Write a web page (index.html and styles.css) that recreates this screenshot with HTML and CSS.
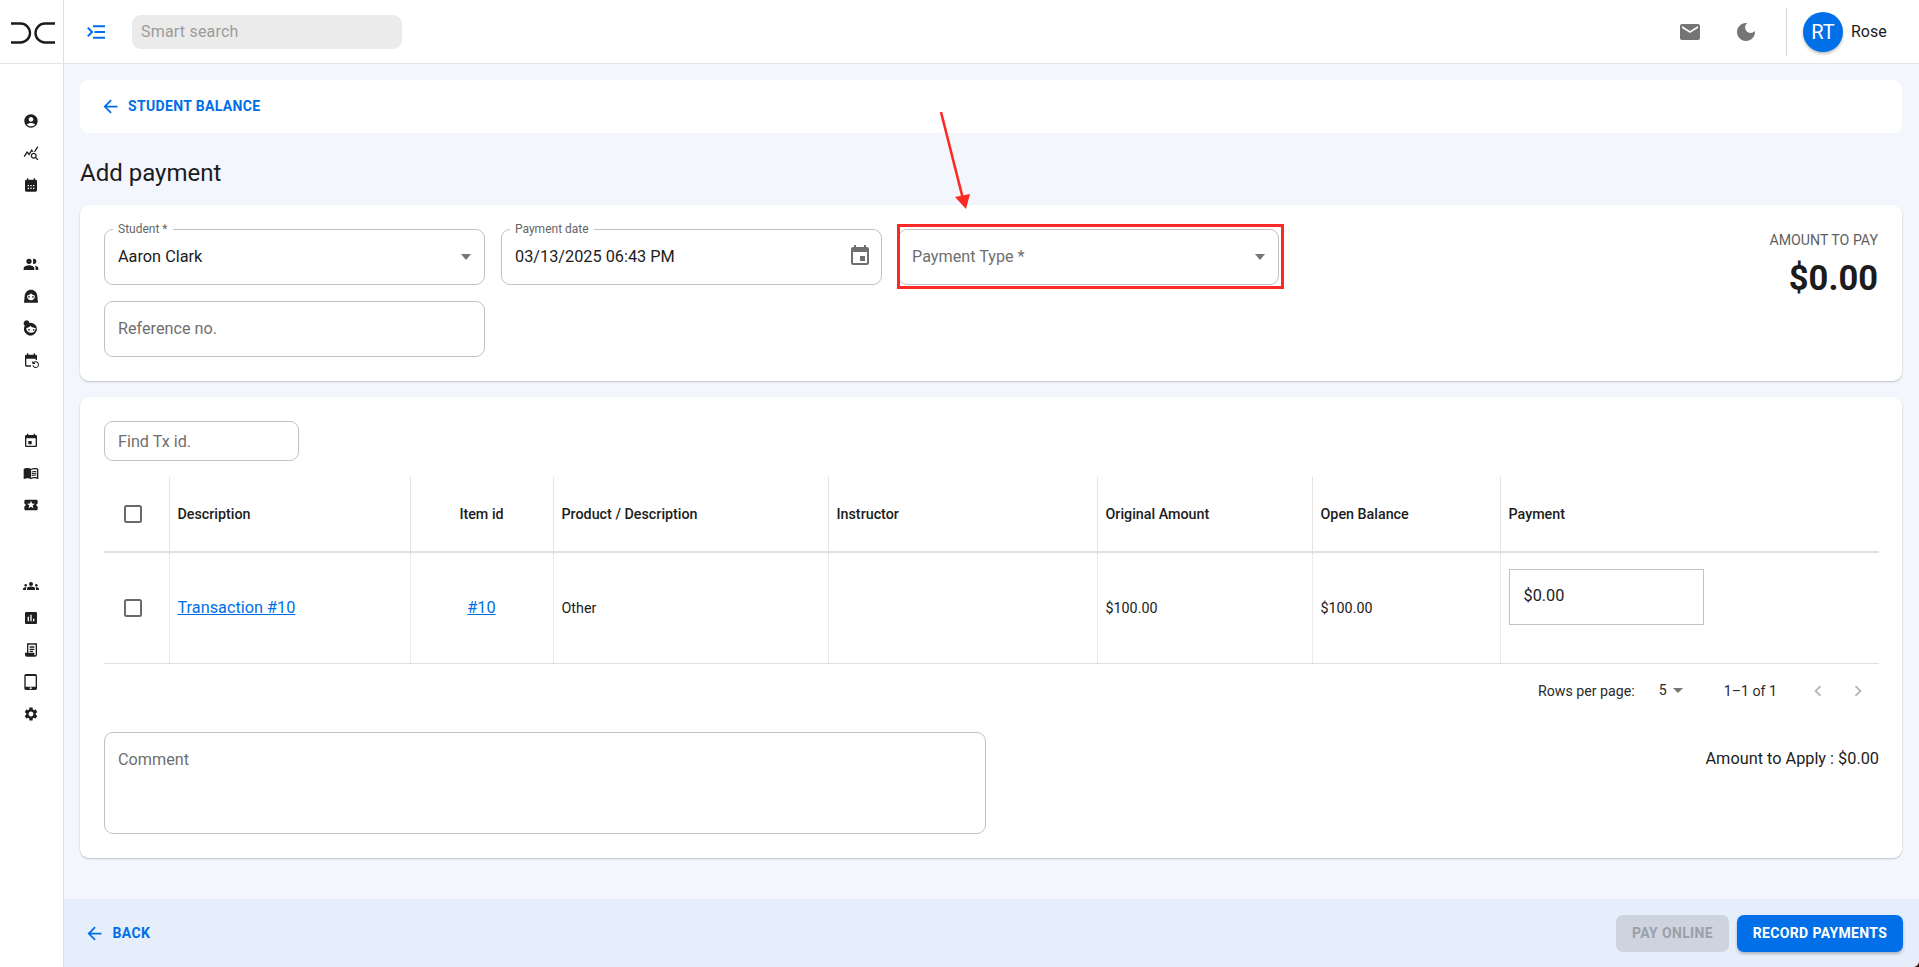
FILE: index.html
```html
<!DOCTYPE html>
<html lang="en">
<head>
<meta charset="utf-8">
<title>Add payment</title>
<link rel="stylesheet" href="styles.css">
</head>
<body>
<div class="app">
  <header class="topbar">
    <div class="logo-cell">
      <svg class="logo" viewBox="0 0 44 22" width="44" height="22"><path d="M0 1.500H9.500a9 9 0 0 1 0 19H0M44 1.500H34a9 9 0 0 0 0 19H44" fill="none" stroke="#1b1b1b" stroke-width="2.400"/></svg>
    </div>
    <div class="topbar-main">
      <svg class="menu-icon" viewBox="0 0 18 14" width="18" height="14"><path d="M6 1.200H18M7.500 7H18M6 12.800H18M.8 2.600 5 7 .8 11.400" fill="none" stroke="#006fe6" stroke-width="2"/></svg>
      <div class="search">Smart search</div>
      <div class="top-actions">
        <svg class="top-icon" viewBox="0 0 24 24"><path d="M20 4H4c-1.100 0-1.990.9-1.990 2L2 18c0 1.100.9 2 2 2h16c1.100 0 2-.9 2-2V6c0-1.100-.9-2-2-2zm0 4-8 5-8-5V6l8 5 8-5v2z"/></svg>
        <svg class="top-icon moon" viewBox="0 0 24 24"><path d="M12 3c-4.970 0-9 4.030-9 9s4.030 9 9 9 9-4.030 9-9c0-.46-.04-.92-.1-1.360-.98 1.370-2.580 2.260-4.400 2.260-2.980 0-5.400-2.420-5.400-5.400 0-1.810.89-3.420 2.260-4.400-.44-.06-.9-.1-1.360-.1z"/></svg>
        <div class="divider"></div>
        <div class="avatar">RT</div>
        <span class="user">Rose</span>
      </div>
    </div>
  </header>
  <div class="body-row">
    <nav class="sidebar">
      <div class="nav-group g1">
        <svg viewBox="0 0 24 24"><path d="M12 2C6.480 2 2 6.480 2 12s4.480 10 10 10 10-4.480 10-10S17.520 2 12 2zm0 4c1.930 0 3.500 1.570 3.500 3.500S13.930 13 12 13s-3.500-1.570-3.500-3.500S10.070 6 12 6zm0 14c-2.030 0-4.430-.82-6.140-2.880C7.550 15.800 9.680 15 12 15s4.450.8 6.140 2.120C16.430 19.180 14.030 20 12 20z"/></svg>
        <svg viewBox="0 0 24 24"><path d="M19.880 18.470c.44-.7.7-1.510.7-2.390 0-2.490-2.010-4.500-4.500-4.500s-4.500 2.010-4.500 4.500 2.010 4.500 4.490 4.500c.88 0 1.700-.26 2.390-.7L21.580 23 23 21.580l-3.120-3.110zm-3.800.11c-1.380 0-2.500-1.120-2.500-2.500s1.120-2.500 2.500-2.500 2.500 1.120 2.500 2.500-1.120 2.500-2.500 2.500zm-.36-8.500c-.74.02-1.450.18-2.100.45l-.55-.83-3.800 6.180-3.010-3.520-3.630 5.810L1 17l5-8 3 3.500L13 6l2.720 4.080zm2.590.5c-.64-.28-1.330-.45-2.050-.49L21.380 2 23 3.180l-4.690 7.400z"/></svg>
        <svg viewBox="0 0 24 24"><path fill-rule="evenodd" d="M19 4h-1V2h-2v2H8V2H6v2H5c-1.100 0-2 .9-2 2v14c0 1.100.9 2 2 2h14c1.100 0 2-.9 2-2V6c0-1.100-.9-2-2-2zM9 14H7v-2h2v2zm4 0h-2v-2h2v2zm4 0h-2v-2h2v2zm-8 4H7v-2h2v2zm4 0h-2v-2h2v2zm4 0h-2v-2h2v2z"/></svg>
      </div>
      <div class="nav-group g2">
        <svg viewBox="0 0 24 24"><path d="M9 12a4 4 0 1 0 0-8 4 4 0 0 0 0 8zm0 2c-3 0-8 1.500-8 4.500V21h16v-2.500C17 15.500 12 14 9 14zM16 4a4 4 0 0 1 0 8c-.4 0-.8 0-1.200-.2A5.500 5.500 0 0 0 15 8a5.500 5.500 0 0 0-.2-3.800C15.200 4 15.600 4 16 4zM18 14.500c2.500.5 5 1.600 5 4V21h-4v-2.500c0-1.500-.3-2.900-1-4z"/></svg>
        <svg viewBox="0 0 24 24"><path fill-rule="evenodd" d="M1.500 22l1-10C3 6.500 7 2.500 12 2.500S21 6.500 21.500 12l1 10zM12 8c-1.500 2-3.500 3-5.700 3.200A5.900 5.900 0 0 0 12 18.500a5.900 5.900 0 0 0 5.700-7.300C15.500 11 13.500 10 12 8zM9 12a1.300 1.300 0 1 0 0 2.600A1.300 1.300 0 0 0 9 12zm6 0a1.300 1.300 0 1 0 0 2.600 1.300 1.300 0 0 0 0-2.600z"/></svg>
        <svg viewBox="0 0 24 24"><path fill-rule="evenodd" d="M5.500.5a4.500 4.500 0 0 0-2.700 8.100A9.700 9.700 0 1 0 12.500 4a9.700 9.700 0 0 0-2.700.4A4.500 4.500 0 0 0 5.500.5zM4.900 12.200c2.500-.1 4.800-1.400 6.100-3.400 1.700 2.200 4.900 3.500 8.100 3.300a7 7 0 1 1-14.200.1zM9 13.500a1.300 1.300 0 1 0 0 2.600 1.300 1.300 0 0 0 0-2.600zm7 0a1.300 1.300 0 1 0 0 2.600 1.300 1.300 0 0 0 0-2.600z"/></svg>
        <svg viewBox="0 0 24 24"><path d="M21 12V6c0-1.100-.9-2-2-2h-1V2h-2v2H8V2H6v2H5c-1.100 0-2 .9-2 2v14c0 1.100.9 2 2 2h7v-2H5V10h14v2h2zm-5.360 8c.43 1.450 1.770 2.500 3.360 2.500 1.930 0 3.500-1.570 3.500-3.500s-1.570-3.500-3.500-3.500c-.95 0-1.820.38-2.450 1H18V18h-4v-4h1.500v1.430c.9-.88 2.140-1.430 3.500-1.430 2.760 0 5 2.240 5 5s-2.240 5-5 5c-2.420 0-4.440-1.720-4.900-4h1.540z"/></svg>
      </div>
      <div class="nav-group g3">
        <svg viewBox="0 0 24 24"><path d="M13 12H8v5h5v-5zM16 1v2H8V1H6v2H5c-1.110 0-1.990.9-1.990 2L3 19c0 1.100.89 2 2 2h14c1.100 0 2-.9 2-2V5c0-1.100-.9-2-2-2h-1V1h-2zm3 18H5V8h14v11z"/></svg>
        <svg viewBox="0 0 24 24"><path d="M21 5c-1.110-.35-2.330-.5-3.500-.5-1.950 0-4.050.4-5.500 1.500-1.450-1.100-3.550-1.500-5.500-1.500S2.450 4.900 1 6v14.650c0 .25.25.5.5.5.1 0 .15-.05.25-.05C3.100 20.450 5.050 20 6.500 20c1.950 0 4.050.4 5.500 1.500 1.350-.85 3.800-1.500 5.500-1.500 1.650 0 3.350.3 4.750 1.050.1.050.15.050.25.050.25 0 .5-.25.5-.5V6c-.6-.45-1.250-.75-2-1zm0 13.500c-1.100-.35-2.300-.5-3.500-.5-1.700 0-4.150.65-5.500 1.500V8c1.350-.85 3.800-1.500 5.500-1.500 1.200 0 2.400.15 3.500.5v11.500zM17.500 10.500c.88 0 1.730.09 2.500.26V9.240c-.79-.15-1.640-.24-2.500-.24-1.700 0-3.240.29-4.500.83v1.660c1.130-.64 2.700-.99 4.500-.99zM13 12.490v1.660c1.130-.64 2.700-.99 4.500-.99.88 0 1.730.09 2.500.26V11.900c-.79-.15-1.640-.24-2.500-.24-1.700 0-3.240.3-4.500.83zM17.500 14.330c-1.700 0-3.240.29-4.500.83v1.660c1.130-.64 2.700-.99 4.500-.99.88 0 1.730.09 2.500.26v-1.520c-.79-.16-1.640-.24-2.500-.24z"/></svg>
        <svg viewBox="0 0 24 24"><path d="M20 12c0-1.100.9-2 2-2V6c0-1.100-.9-2-2-2H4c-1.100 0-1.990.9-1.990 2v4c1.100 0 1.990.9 1.990 2s-.89 2-2 2v4c0 1.100.9 2 2 2h16c1.100 0 2-.9 2-2v-4c-1.100 0-2-.9-2-2zm-4.420 4.800L12 14.500l-3.580 2.300 1.080-4.120-3.290-2.690 4.240-.25L12 5.800l1.540 3.950 4.240.25-3.290 2.690 1.090 4.110z"/></svg>
      </div>
      <div class="nav-group g4">
        <svg viewBox="0 0 24 24"><path d="M12 12.750c1.630 0 3.070.39 4.240.9 1.080.48 1.760 1.560 1.760 2.730V18H6v-1.610c0-1.180.68-2.260 1.760-2.730 1.170-.52 2.610-.91 4.240-.91zM4 13c1.100 0 2-.9 2-2s-.9-2-2-2-2 .9-2 2 .9 2 2 2zm1.130 1.100c-.37-.06-.74-.1-1.130-.1-.99 0-1.930.21-2.780.58C.48 14.900 0 15.620 0 16.430V18h4.500v-1.610c0-.83.23-1.610.63-2.290zM20 13c1.100 0 2-.9 2-2s-.9-2-2-2-2 .9-2 2 .9 2 2 2zm4 3.430c0-.81-.48-1.530-1.220-1.850-.85-.37-1.790-.58-2.780-.58-.39 0-.76.04-1.130.1.4.68.63 1.460.63 2.290V18H24v-1.570zM12 6c1.660 0 3 1.340 3 3s-1.340 3-3 3-3-1.340-3-3 1.340-3 3-3z"/></svg>
        <svg viewBox="0 0 24 24"><path d="M19 3H5c-1.100 0-2 .9-2 2v14c0 1.100.9 2 2 2h14c1.100 0 2-.9 2-2V5c0-1.100-.9-2-2-2zM9 17H7v-7h2v7zm4 0h-2V7h2v10zm4 0h-2v-4h2v4z"/></svg>
        <svg viewBox="0 0 24 24"><path fill-rule="evenodd" d="M6 2h15v17c0 1.660-1.340 3-3 3H6c-1.660 0-3-1.340-3-3v-3h3V2zm2 2v12h9v3c0 .55.45 1 1 1s1-.45 1-1V4H8zm2 2.500h7v2h-7zm0 3.500h7v2h-7zm0 3h5v2h-5z"/></svg>
        <svg viewBox="0 0 24 24"><path d="M18.500 0h-14C3.120 0 2 1.120 2 2.500v19C2 22.880 3.120 24 4.500 24h14c1.380 0 2.500-1.120 2.500-2.500v-19C21 1.120 19.880 0 18.500 0zm-7 23c-.83 0-1.500-.67-1.500-1.500s.67-1.500 1.500-1.500 1.500.67 1.500 1.500-.67 1.500-1.500 1.500zm7.500-4H4V3h15v16z"/></svg>
        <svg viewBox="0 0 24 24"><path d="M19.140 12.940c.04-.3.06-.61.06-.94 0-.32-.02-.64-.07-.94l2.030-1.580c.18-.14.23-.41.12-.61l-1.920-3.320c-.12-.22-.37-.29-.59-.22l-2.390.96c-.5-.38-1.030-.7-1.620-.94l-.36-2.540c-.04-.24-.24-.41-.48-.41h-3.840c-.24 0-.43.17-.47.41l-.36 2.540c-.59.24-1.130.57-1.620.94l-2.390-.96c-.22-.08-.47 0-.59.22L2.740 8.870c-.12.21-.08.47.12.61l2.030 1.580c-.05.3-.09.63-.09.94s.02.64.07.94l-2.030 1.580c-.18.14-.23.41-.12.61l1.920 3.320c.12.22.37.29.59.22l2.390-.96c.5.38 1.030.7 1.620.94l.36 2.540c.05.24.24.41.48.41h3.840c.24 0 .44-.17.47-.41l.36-2.540c.59-.24 1.130-.56 1.620-.94l2.390.96c.22.08.47 0 .59-.22l1.920-3.320c.12-.22.07-.47-.12-.61l-2.010-1.580zM12 15.600c-1.980 0-3.600-1.620-3.600-3.600s1.620-3.600 3.600-3.600 3.600 1.620 3.600 3.600-1.620 3.600-3.600 3.600z"/></svg>
      </div>
    </nav>
    <div class="page">
      <main class="content">
        <div class="card crumb">
          <svg class="arrow" viewBox="0 0 24 24"><path d="M20 11H7.830l5.590-5.590L12 4l-8 8 8 8 1.410-1.410L7.830 13H20v-2z"/></svg>
          <span class="crumb-text">STUDENT BALANCE</span>
        </div>
        <h1 class="title">Add payment</h1>
        <section class="card form-card">
          <div class="fields">
            <div class="field">
              <span class="legend">Student *</span>
              <span class="value">Aaron Clark</span>
              <span class="caret"></span>
            </div>
            <div class="field">
              <span class="legend">Payment date</span>
              <span class="value">03/13/2025 06:43 PM</span>
              <svg class="cal" viewBox="0 0 24 24"><path d="M17 12h-5v5h5v-5zM16 1v2H8V1H6v2H5c-1.110 0-1.990.9-1.990 2L3 19c0 1.100.89 2 2 2h14c1.100 0 2-.9 2-2V5c0-1.100-.9-2-2-2h-1V1h-2zm3 18H5V8h14v11z"/></svg>
            </div>
            <div class="field">
              <span class="placeholder">Payment Type *</span>
              <span class="caret"></span>
            </div>
            <div class="field">
              <span class="placeholder">Reference no.</span>
            </div>
          </div>
          <div class="amount">
            <div class="amount-label">AMOUNT TO PAY</div>
            <div class="amount-value">$0.00</div>
          </div>
        </section>
        <section class="card table-card">
          <div class="find"><span class="placeholder">Find Tx id.</span></div>
          <table class="tx">
            <colgroup>
              <col class="c1"><col class="c2"><col class="c3"><col class="c4"><col class="c5"><col class="c6"><col class="c7"><col class="c8">
            </colgroup>
            <thead>
              <tr>
                <th class="center"><span class="check"></span></th>
                <th>Description</th>
                <th class="center">Item id</th>
                <th>Product / Description</th>
                <th>Instructor</th>
                <th>Original Amount</th>
                <th>Open Balance</th>
                <th>Payment</th>
              </tr>
            </thead>
            <tbody>
              <tr>
                <td class="center"><span class="check"></span></td>
                <td><a class="link" href="#">Transaction #10</a></td>
                <td class="center"><a class="link" href="#">#10</a></td>
                <td>Other</td>
                <td></td>
                <td>$100.00</td>
                <td>$100.00</td>
                <td><div class="pay-input">$0.00</div></td>
              </tr>
            </tbody>
          </table>
          <div class="pager">
            <span class="rows-label">Rows per page:</span>
            <span class="rows-value">5</span>
            <span class="caret small"></span>
            <span class="range">1–1 of 1</span>
            <svg class="chev" viewBox="0 0 24 24"><path d="M15.410 7.410 14 6l-6 6 6 6 1.410-1.410L10.830 12z"/></svg>
            <svg class="chev" viewBox="0 0 24 24"><path d="M10 6 8.590 7.410 13.170 12l-4.580 4.580L10 18l6-6z"/></svg>
          </div>
          <div class="bottom-row">
            <div class="comment"><span class="placeholder">Comment</span></div>
            <div class="apply">Amount to Apply : $0.00</div>
          </div>
        </section>
      </main>
      <footer class="footer">
        <div class="back">
          <svg class="arrow" viewBox="0 0 24 24"><path d="M20 11H7.830l5.590-5.590L12 4l-8 8 8 8 1.410-1.410L7.830 13H20v-2z"/></svg>
          <span>BACK</span>
        </div>
        <div class="footer-actions">
          <div class="btn disabled">PAY ONLINE</div>
          <div class="btn primary">RECORD PAYMENTS</div>
        </div>
      </footer>
    </div>
  </div>
</div>
<div class="highlight"></div>
<svg class="pointer" viewBox="0 0 40 110" width="40" height="110"><path d="M3 2 24.500 87" stroke="#fb2a25" stroke-width="2.600" fill="none"/><path d="M17 87 32 84 28 99z" fill="#fb2a25"/></svg>
</body>
</html>
```
FILE: styles.css
```css
* { box-sizing: border-box; }
html, body { margin: 0; height: 100%; }
body {
  font-family: Roboto, "Liberation Sans", sans-serif;
  color: #1c1c1c;
  background: #fff;
  overflow: hidden;
  position: relative;
}
.app { display: flex; flex-direction: column; height: 967px; }

.topbar { display: flex; height: 64px; flex: none; border-bottom: 1px solid #e3e5e8; background: #fff; }
.logo-cell { width: 64px; flex: none; border-right: 1px solid #dcdee2; padding: 22px 0 0 11px; }
.logo { display: block; }
.topbar-main { flex: 1; display: flex; align-items: center; padding-left: 23px; }
.menu-icon { flex: none; }
.search {
  margin-left: 27px; width: 270px; height: 34px; border-radius: 9px; background: #ebebeb;
  color: #9b9b9b; font-size: 16px; line-height: 33px; padding-left: 9px; letter-spacing: .2px;
}
.top-actions { margin-left: auto; display: flex; align-items: center; height: 100%; }
.top-icon { width: 24px; height: 24px; fill: #757575; display: block; }
.moon { margin-left: 32px; }
.divider { width: 1px; height: 48px; background: #d6d6d6; margin-left: 28px; }
.avatar {
  width: 40px; height: 40px; border-radius: 50%; background: #016fe8; color: #fff;
  font-size: 20px; line-height: 40px; text-align: center; margin-left: 16px;
  box-shadow: 0 2px 3px rgba(0,0,0,.25);
}
.user { font-size: 16px; margin-left: 8px; width: 68px; }

.body-row { flex: 1; display: flex; min-height: 0; }
.sidebar { width: 64px; flex: none; border-right: 1px solid #dcdee2; background: #fff; position: relative; }
.nav-group { display: flex; flex-direction: column; align-items: center; width: 62px; gap: 16px; }
.nav-group svg { width: 16px; height: 16px; fill: #1f1f1f; display: block; }
.g1 { padding-top: 49px; }
.g2 { padding-top: 63px; }
.g3 { padding-top: 65px; }
.g4 { padding-top: 65px; }

.page { flex: 1; display: flex; flex-direction: column; min-width: 0; background: #f3f6fd; }
.content { flex: 1; padding: 16px 17px 0 16px; }
.card { background: #fff; border-radius: 9px; }
.crumb { height: 53px; display: flex; align-items: center; padding: 0 0 1px 19.500px; }
.arrow { width: 21px; height: 21px; fill: #006fe6; display: block; flex: none; }
.crumb-text { margin-left: 7.500px; color: #006fe6; font-size: 14px; font-weight: 700; letter-spacing: .35px; }
.title { font-size: 24px; font-weight: 400; line-height: 32px; margin: 24px 0 16px; color: #1c1c1c; }

.form-card {
  display: flex; justify-content: space-between; padding: 24px;
  box-shadow: 0 1px 2px rgba(0,0,0,.22);
}
.fields { display: grid; grid-template-columns: repeat(3, 381px); grid-auto-rows: 56px; gap: 16px; }
.field { border: 1px solid #c2c2c2; border-radius: 9px; position: relative; display: flex; align-items: center; padding: 0 13px 2px; }
.legend {
  position: absolute; top: -8px; left: 8px; background: #fff; padding: 0 5px;
  font-size: 12px; line-height: 14px; color: #666;
}
.value { font-size: 16.300px; color: #1c1c1c; }
.placeholder { font-size: 16.200px; color: #6f6f6f; }
.caret { width: 0; height: 0; border-left: 5px solid transparent; border-right: 5px solid transparent; border-top: 6px solid #757575; margin: 2px 0 0 auto; }
.cal { position: absolute; right: 9px; top: 14px; width: 24px; height: 24px; fill: #6f6f6f; }
.amount { text-align: right; padding-top: 1px; }
.amount-label { font-size: 14.200px; line-height: 20px; color: #5f5f5f; }
.amount-value { font-size: 34.500px; font-weight: 700; line-height: 44px; margin-top: 6px; color: #1c1c1c; }

.table-card { margin-top: 16px; padding: 24px 23px 24px 24px; height: 461px; box-shadow: 0 1px 2px rgba(0,0,0,.22); }
.find { width: 195px; height: 40px; border: 1px solid #c2c2c2; border-radius: 9px; display: flex; align-items: center; padding-left: 13px; }
.tx { width: 1775px; table-layout: fixed; border-collapse: collapse; margin-top: 16px; }
.c1 { width: 65px; } .c2 { width: 241px; } .c3 { width: 143px; } .c4 { width: 275px; }
.c5 { width: 269px; } .c6 { width: 215px; } .c7 { width: 188px; } .c8 { width: 379px; }
.tx th {
  height: 75px; font-size: 14.300px; font-weight: 500; text-align: left; padding: 0 8px;
  border-bottom: 2px solid #e0e0e0; border-left: 1px solid #e4e4e4; color: #1c1c1c;
}
.tx td {
  height: 111px; font-size: 14.300px; padding: 0 8px;
  border-bottom: 1px solid #e0e0e0; border-left: 1px dotted #d8d8d8;
}
.tx th:first-child, .tx td:first-child { border-left: 0; padding-right: 14px; }
.tx .center { text-align: center; }
.check { display: inline-block; width: 18px; height: 18px; border: 2px solid #6a6a6a; border-radius: 2.500px; vertical-align: middle; }
.link { color: #006fe6; font-size: 16.300px; text-decoration: underline; }
.pay-input { width: 195px; height: 56px; border: 1px solid #c2c2c2; font-size: 16.300px; display: flex; align-items: center; padding: 0 0 2px 14px; margin-top: -22px; }

.pager { display: flex; align-items: center; justify-content: flex-end; height: 54px; font-size: 14.200px; color: #2a2a2a; padding-right: 10px; }
.rows-value { margin-left: 24px; margin-top: -2px; }
.caret.small { border-left-width: 5px; border-right-width: 5px; border-top-width: 5px; margin: 0 0 0 6px; }
.range { margin-left: 41px; margin-right: 30px; }
.chev { width: 22px; height: 22px; fill: #b5b5b5; }
.chev + .chev { margin-left: 18px; }
.bottom-row { display: flex; justify-content: space-between; margin-top: 14px; }
.comment { width: 882px; height: 102px; border: 1px solid #c2c2c2; border-radius: 9px; padding: 17px 13px; }
.apply { font-size: 16.300px; padding-top: 17px; color: #1c1c1c; }

.footer {
  height: 68px; flex: none; display: flex; align-items: center;
  justify-content: space-between; padding: 0 16px 0 19.500px;
  background:
    radial-gradient(circle at 0 0, #e7eefb 5.500px, #3a1a10 6.500px) no-repeat right bottom / 6px 6px,
    #e7eefb;
}
.back { display: flex; align-items: center; color: #006fe6; font-size: 14px; font-weight: 700; letter-spacing: .35px; }
.back span { margin-left: 8px; }
.footer-actions { display: flex; gap: 8px; }
.btn { height: 37px; border-radius: 7px; font-size: 14px; font-weight: 700; letter-spacing: .35px; line-height: 37px; text-align: center; }
.disabled { width: 113px; background: #cdd3df; color: #9a9fa9; }
.primary { width: 166px; background: #016fe8; color: #fff; box-shadow: 0 2px 3px rgba(0,0,0,.25); }

.highlight { position: absolute; left: 897px; top: 224px; width: 387px; height: 65px; border: 3px solid #fb2a25; pointer-events: none; }
.pointer { position: absolute; left: 938px; top: 110px; pointer-events: none; }
```
